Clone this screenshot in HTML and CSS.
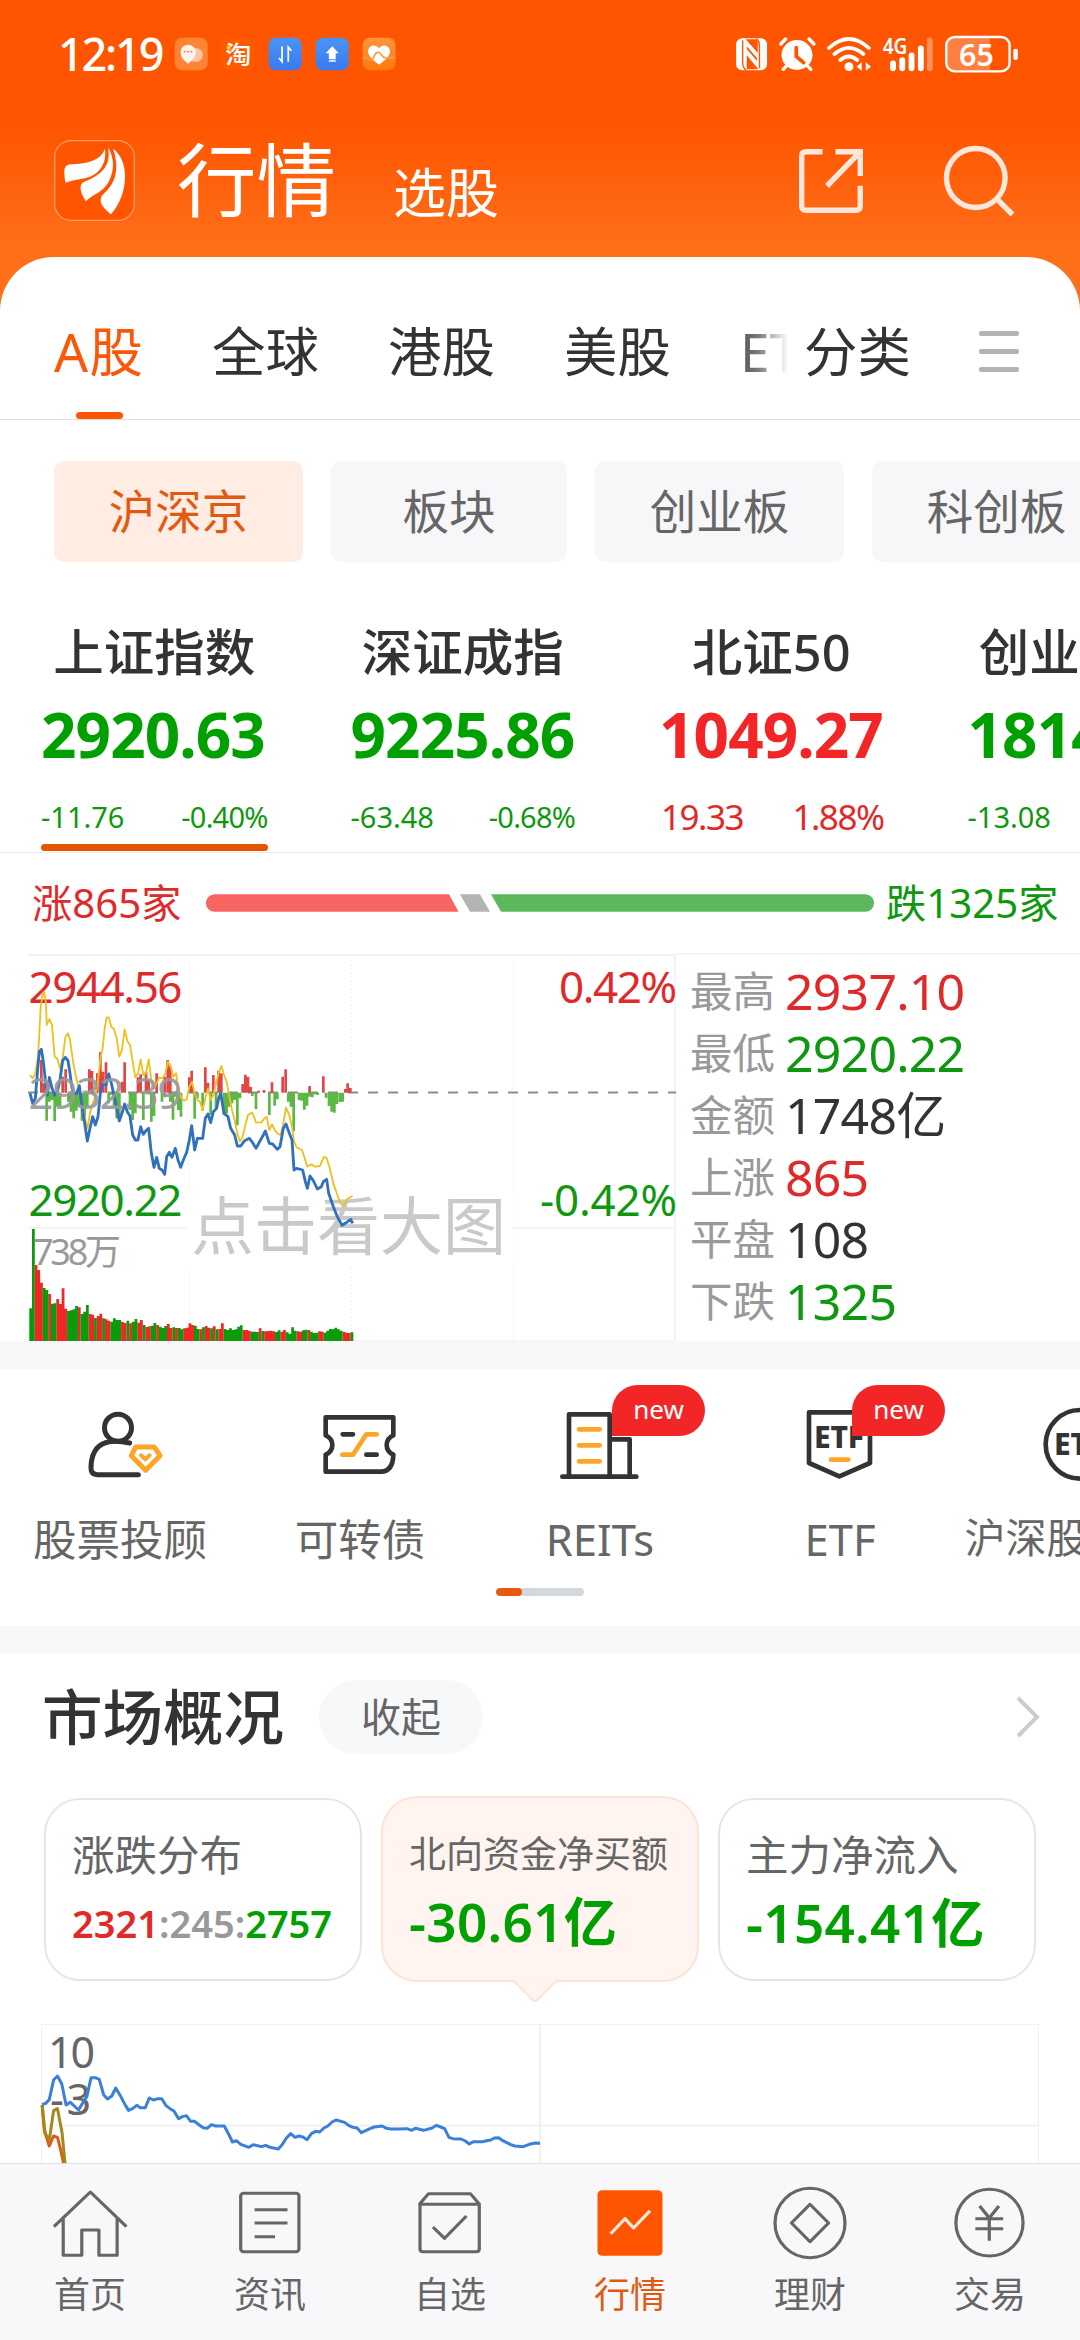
FILE: index.html
```html
<!DOCTYPE html>
<html lang="zh-CN">
<head>
<meta charset="utf-8">
<title>行情</title>
<link rel="stylesheet" href="styles.css">
</head>
<body>
<div class="app">
  <header class="top">
    <div class="status">
      <span class="clock">12:19</span>
      <svg class="notif" viewBox="500 100 660 120" preserveAspectRatio="none">
        <defs>
          <linearGradient id="gb" x1="0" y1="0" x2="0" y2="1"><stop offset="0" stop-color="#4a95f5"/><stop offset="1" stop-color="#3a78f0"/></linearGradient>
          <linearGradient id="go" x1="0" y1="0" x2="0" y2="1"><stop offset="0" stop-color="#ff9440"/><stop offset="1" stop-color="#ff7a0a"/></linearGradient>
        </defs>
        <rect x="508" y="111" width="96" height="98" rx="22" fill="#ff8433"/>
        <circle cx="569" cy="163" r="21" fill="#ffc6a0"/>
        <path d="M547 189c-12-9-22-19-22-35a22 22 0 0 1 44 0c0 16-10 26-22 35z" fill="#fff5ee"/>
        <path d="M534 153h5M544 153h5M554 153h5" stroke="#f08050" stroke-width="5"/>
        <rect x="644" y="111" width="96" height="98" rx="22" fill="#ff5a00"/>
        <text x="693" y="189" font-size="76" font-weight="500" fill="#fff" text-anchor="middle">淘</text>
        <circle cx="665" cy="141" r="6" fill="#ffe100"/>
        <rect x="781" y="111" width="96" height="98" rx="22" fill="url(#gb)"/>
        <path d="M820 137v46l-9-11M838 183v-44l9 11" fill="none" stroke="#fff" stroke-width="5"/>
        <rect x="918" y="111" width="96" height="98" rx="22" fill="url(#gb)"/>
        <path d="M966 137l19 21h-9v18h-20v-18h-9zM956 179h20v4h-20z" fill="#fff"/>
        <rect x="1054" y="111" width="96" height="98" rx="22" fill="url(#go)"/>
        <path d="M1102 192c-18-14-32-25-32-40 0-18 22-24 32-9 10-15 32-9 32 9 0 15-14 26-32 40z" fill="#fff"/>
        <path d="M1054 171h14c6 9 14 9 18 0 7-20 16-20 23-8 6 9 12 10 18 8h23" fill="none" stroke="#ff9c40" stroke-width="5"/>
      </svg>
      <svg class="system" viewBox="560 100 840 120" preserveAspectRatio="none">
        <rect x="569" y="113" width="90" height="96" rx="18" fill="#fff"/>
        <path d="M588 119v68q0 13 10 22M637 203v-68q0-13-8-22" fill="none" stroke="#ff5500" stroke-width="4"/>
        <path d="M597 116L632 157V116zM600 206V164L634 206zM600 137l30 36v8l-30-36z" fill="#ff5500"/>
        <circle cx="746" cy="163" r="45" fill="#fff"/>
        <path d="M699 130l14-15M795 130l-14-15M715 196l-9 10M777 196l9 10" stroke="#fff" stroke-width="10" stroke-linecap="round"/>
        <path d="M744 141v26l21 19" fill="none" stroke="#ff5500" stroke-width="11" stroke-linecap="round"/>
        <g fill="none" stroke="#fff" stroke-width="11" stroke-linecap="round">
          <path d="M839 142q58-54 116 0M855 160q42-37 84 0M872 178q25-21 49 0"/>
        </g>
        <circle cx="897" cy="198" r="13" fill="#fff"/>
        <path d="M919 198l15-13v25zM961 198l-15-13v25z" fill="#fff"/>
        <text x="995" y="159" font-size="66" font-weight="600" textLength="72" lengthAdjust="spacingAndGlyphs" fill="#fff">4G</text>
        <g stroke="#fff" stroke-width="17" stroke-linecap="round"><path d="M1025 188v15M1052 178v25M1079 164v39M1106 143v60"/><path d="M1132 119v84" opacity=".35"/></g>
        <path d="M1205 112h102v96h-102q-22 0-22-22v-52q0-22 22-22z" fill="#ff7f42"/>
        <rect x="1180" y="109" width="184" height="103" rx="25" fill="none" stroke="#fff" stroke-width="7"/>
        <rect x="1375" y="144" width="13" height="34" rx="6" fill="#fff"/>
        <text x="1217" y="195" font-size="94" font-weight="600" textLength="101" lengthAdjust="spacingAndGlyphs" fill="#fff">65</text>
      </svg>
    </div>
    <div class="titlebar">
      <svg class="logo" viewBox="157 420 235 242" preserveAspectRatio="none">
        <rect x="159" y="422" width="231" height="238" rx="48" fill="#ff5500" stroke="#ff9a66" stroke-width="4"/>
        <path d="M305 446c-14 38-52 44-104 47q-13 2-14 20 0 24 4 35c26-13 62-8 86-27 26-20 31-48 28-75z" fill="#fff"/>
        <path d="M314 442c7 46-5 78-72 104q-8 4-8 18 2 20 16 39c18-21 50-26 66-59 19-38 14-72-2-102z" fill="#fff"/>
        <path d="M329 446c18 62 9 100-30 137q-8 8-6 24 4 15 29 35c26-30 42-72 41-116-1-38-13-62-34-80z" fill="#fff"/>
      </svg>
      <h1 class="title">行情</h1>
      <span class="subtitle">选股</span>
      <svg class="share" viewBox="799 149 64 64"><g fill="none" stroke="#ffe6da" stroke-width="5.4"><path d="M822.5 151.700H806q-4.300 0-4.300 4.300v50q0 4.300 4.300 4.300h50q4.300 0 4.300-4.300v-20.300"/><path d="M835.500 151.700h24.800V176M859 153L827 186"/></g></svg>
      <svg class="search" viewBox="943 145 72 72"><g fill="none" stroke="#ffe6da" stroke-width="5.4"><ellipse cx="975.800" cy="178" rx="29.300" ry="29.500"/><path d="M997 199l15.500 15.500"/></g></svg>
    </div>
  </header>

  <main class="panel">
    <nav class="tabs">
      <span class="tab on">A股</span><span class="tab">全球</span><span class="tab">港股</span><span class="tab">美股</span><span class="tab cut">ETF</span><span class="tab sort">分类</span>
      <span class="menu"><i></i><i></i><i></i></span>
    </nav>
    <div class="chips">
      <span class="chip on">沪深京</span><span class="chip narrow">板块</span><span class="chip">创业板</span><span class="chip">科创板</span>
    </div>
    <section class="indices">
      <div class="index fall on"><h2>上证指数</h2><strong>2920.63</strong><p><span>-11.76</span><span>-0.40%</span></p></div>
      <div class="index fall"><h2>深证成指</h2><strong>9225.86</strong><p><span>-63.48</span><span>-0.68%</span></p></div>
      <div class="index rise"><h2>北证50</h2><strong>1049.27</strong><p><span>19.33</span><span>1.88%</span></p></div>
      <div class="index fall"><h2>创业板指</h2><strong>1814.26</strong><p><span>-13.08</span><span>-0.72%</span></p></div>
    </section>
    <div class="breadth">
      <span class="up">涨865家</span>
      <svg class="ratio" viewBox="206 894 668 17.500"><path d="M214.700 894H449l9.500 17.500H214.700a8.750 8.750 0 0 1 0-17.500z" fill="#f66562"/><path d="M460 894h20l10 17.500h-20z" fill="#b3b3b3"/><path d="M491 894h374.300a8.750 8.750 0 0 1 0 17.500H501z" fill="#5cb85c"/></svg>
      <span class="down">跌1325家</span>
    </div>
    <section class="quote">
      <svg class="minute" viewBox="28 953 648 388">
        <g fill="none" stroke="#f3f3f5" stroke-width="2"><path d="M28 955H676M28 1227.700H676M28 1341H676M675 954v387"/><path d="M189.700 956v385M351.500 956v385M513 956v385" stroke-width="1" stroke="#e6e6e6" stroke-dasharray="1 3"/></g>
        <path d="M28 1092.500H676" stroke="#8c8c8c" stroke-width="2" stroke-dasharray="10 10"/>
        <rect x="187" y="1190" width="326" height="76" fill="#fff"/>
        <text class="mark" x="191" y="1249">点击看大图</text>
        <g class="lab">
          <text x="28.500" y="1002.700" textLength="154" class="r">2944.56</text>
          <text x="677" y="1002.700" text-anchor="end" textLength="118" class="r">0.42%</text>
        </g>
        <g transform="translate(0 940) scale(.33333)" fill="none" stroke-linejoin="round">
          <path stroke="#e04848" stroke-width="8.100" d="M124 458V360M132 458V430M188 458V410M197 458V388M268 458V388M276 458V393M292 458V400M301 458V337M309 458V395M318 458V367M366 458V425M374 458V367M414 458V412M422 458V403M438 458V395M446 458V420M470 458V400M494 458V410M503 458V360M511 458V380M568 458V412M575 458V392M616 458V382M624 458V428M640 458V405M656 458V392M664 458V400M728 458V432M736 458V404M744 458V410M752 458V440M776 458V452M792 458V450M816 458V427M848 458V410M857 458V388M929 458V438M970 458V409M1036 458V447M1043 458V430M1051 458V444"/>
          <path stroke="#5cb845" stroke-width="8.100" d="M140 458V542M148 458V485M156 458V480M164 458V544M172 458V500M180 458V498M205 458V485M213 458V515M221 458V535M229 458V512M237 458V500M246 458V542M254 458V530M262 458V500M326 458V490M334 458V465M342 458V500M350 458V535M358 458V540M390 458V510M398 458V540M406 458V520M430 458V540M454 458V545M462 458V528M486 458V485M495 458V472M511 458V485M519 458V539M527 458V470M535 458V510M543 458V530M584 458V536M592 458V475M608 458V512M632 458V525M648 458V505M672 458V525M680 458V520M688 458V500M696 458V490M704 458V480M712 458V556M720 458V475M757 458V468M768 458V507M808 458V525M824 458V497M832 458V478M865 458V485M873 458V500M881 458V574M897 458V480M905 458V482M913 458V509M921 458V497M929 458V470M937 458V472M945 458V463M953 458V465M978 458V473M987 458V498M995 458V515M1003 458V518M1011 458V492M1020 458V486M1028 458V485"/>
          <g id="volume" stroke-width="8.300"></g>
          <polyline stroke="#f0c020" stroke-width="5.500" points="90,405 98,415 106,400 114,350 118,280 122,200 128,165 132,155 138,190 140,255 148,237 156,255 164,350 172,357 180,385 188,355 196,292 204,280 210,300 220,370 230,420 238,450 246,490 254,530 262,565 270,520 278,490 286,470 294,420 302,350 308,325 314,265 320,232 326,232 334,260 342,268 350,295 358,350 366,330 374,268 382,303 390,315 398,365 406,412 414,400 422,358 430,405 438,400 446,358 454,420 462,445 470,430 478,412 488,415 496,400 504,365 512,378 520,410 528,400 536,450 544,475 552,482 560,478 568,440 576,425 584,460 592,480 600,485 608,510 616,475 624,445 632,480 640,465 648,430 656,400 664,378 672,405 680,425 688,470 696,510 704,540 712,580 720,605 728,590 736,555 744,525 756,518 762,530 768,548 784,547 792,537 800,530 808,570 816,553 824,570 832,580 842,585 850,550 858,503 868,525 876,560 882,605 890,622 906,630 914,655 922,680 934,673 945,680 960,678 972,650 980,655 988,680 1000,730 1012,765 1022,790 1030,797 1044,775 1058,768"/>
          <polyline stroke="#3070bd" stroke-width="8.500" points="90,460 98,490 106,475 112,400 118,335 124,328 130,365 136,420 142,465 148,412 156,445 164,465 172,455 180,420 188,362 196,352 204,362 210,400 216,445 222,462 230,460 238,437 246,500 254,550 262,603 270,565 278,530 286,555 294,530 302,450 310,430 318,435 326,402 334,430 342,465 350,505 358,543 366,520 374,492 382,515 390,528 398,585 406,600 414,600 422,560 430,583 438,572 446,565 454,640 462,682 470,652 478,685 486,690 494,703 500,650 508,637 516,652 526,625 534,660 542,682 550,660 560,637 568,600 575,557 584,630 592,595 608,595 616,535 624,522 632,548 640,515 650,505 656,475 662,460 672,520 684,530 692,565 704,585 712,618 722,618 734,602 748,595 758,608 768,625 780,603 790,585 796,573 808,610 818,612 832,628 840,620 850,565 858,552 868,580 876,600 882,690 890,685 908,690 916,725 922,745 930,708 940,722 952,747 964,740 970,725 980,718 986,760 1000,800 1012,830 1026,856 1036,850 1052,838 1058,850"/>
        </g>
        <g class="lab">
          <text x="28.500" y="1108.700" textLength="154" class="n" opacity=".9">2932.39</text>
          <text x="28.500" y="1215.700" textLength="154" class="g">2920.22</text>
          <text x="677" y="1215.700" text-anchor="end" textLength="137" class="g">-0.42%</text>
          <text x="33" y="1265" textLength="88" class="n vol">738万</text>
        </g>
      </svg>
      <dl class="stats">
        <div><dt>最高</dt><dd class="up">2937.10</dd></div>
        <div><dt>最低</dt><dd class="down">2920.22</dd></div>
        <div><dt>金额</dt><dd>1748亿</dd></div>
        <div><dt>上涨</dt><dd class="up">865</dd></div>
        <div><dt>平盘</dt><dd>108</dd></div>
        <div><dt>下跌</dt><dd class="down">1325</dd></div>
      </dl>
    </section>

    <section class="tools">
      <div class="tool-row">
        <div class="tool">
          <svg viewBox="36 33 288 288"><g fill="none" stroke="#333" stroke-width="15" stroke-linecap="round" stroke-linejoin="round"><circle cx="174" cy="128" r="40.500"/><path d="M209 174C150 160 93 168 93 250q0 19 19 19h123"/><g stroke="#ffa526"><path d="M227 186h56l17 26-43 44-43-44z"/><path d="M243 211l13 12 13-12" stroke-width="12"/></g></g></svg>
          <span>股票投顾</span></div>
        <div class="tool">
          <svg viewBox="756 33 288 288"><g fill="none" stroke="#333" stroke-width="14" stroke-linecap="round" stroke-linejoin="round"><path d="M797 97h203v54q-20 9-20 29t20 29q-1 50-37 51H797v-51q20-9 20-29t-20-29z"/><path d="M848 148h31M919 209h31"/><path d="M847 209h32l40-61h31" stroke="#ffa526"/></g></svg>
          <span>可转债</span></div>
        <div class="tool">
          <svg viewBox="6 63 288 288"><g fill="none" stroke="#333" stroke-width="14" stroke-linecap="round" stroke-linejoin="round"><path d="M37 305h222M57 305V118h122v187M179 193h60v112"/><path d="M87 163h62M87 211h62M87 259h62" stroke="#ffa526"/></g></svg>
          <b class="new">new</b><span>REITs</span></div>
        <div class="tool">
          <svg viewBox="726 63 288 288"><g fill="none" stroke="#333" stroke-width="14" stroke-linecap="round" stroke-linejoin="round"><path d="M777 112h183v152l-92 40-91-40z"/><path d="M843 254h52" stroke="#ffa526"/></g><text class="etf" x="792" y="220" textLength="150">ETF</text></svg>
          <b class="new">new</b><span>ETF</span></div>
        <div class="tool">
          <svg viewBox="1446 63 288 288"><circle cx="1590" cy="208" r="103" fill="none" stroke="#333" stroke-width="14"/><text class="etf" x="1512" y="241" textLength="150">ETF</text></svg>
          <span class="sm">沪深股通ETF</span></div>
      </div>
      <div class="pager"><i></i></div>
    </section>

    <section class="market">
      <div class="head"><h3>市场概况</h3><span class="pill">收起</span><svg viewBox="0 0 26 42"><path d="M3 2l19 19L3 40" fill="none" stroke="#ccc" stroke-width="4"/></svg></div>
      <div class="cards">
        <div class="card"><h4>涨跌分布</h4><p class="tri"><span class="up">2321</span><span class="flat">:245:</span><span class="down">2757</span></p></div>
        <div class="card on"><h4>北向资金净买额</h4><p class="down">-30.61亿</p></div>
        <div class="card"><h4>主力净流入</h4><p class="down">-154.41亿</p></div>
      </div>
      <svg class="flow" viewBox="40 2023 1000 140">
        <g fill="none" stroke="#f1f1f3"><path d="M41.500 2163V2024.500H1038.500V2163" stroke-width="1"/><path d="M540 2024v139M41 2125.500h997" stroke-width="2"/></g>
        <g font-size="43" fill="#666"><text x="48" y="2067.500" textLength="47">10</text><text x="50" y="2114.500" textLength="41">-3</text></g>
        <g transform="translate(0 2000) scale(.35714 .33333)" fill="none" stroke-linejoin="round">
          <polyline vector-effect="non-scaling-stroke" stroke="#e05a10" stroke-width="3" points="118,315 124,390 138,438 150,408 161,412 170,450 178,490"/>
          <polyline vector-effect="non-scaling-stroke" stroke="#a8861c" stroke-width="3" points="118,315 126,400 138,420 150,332 161,326 174,400 182,490"/>
          <polyline vector-effect="non-scaling-stroke" stroke="#3a7fd8" stroke-width="3" points="118,313 128,310 138,299 150,240 161,228 173,252 185,315 197,307 208,318 220,330 232,308 243,290 255,233 267,233 278,238 290,284 301,297 313,288 324,264 338,289 350,314 360,331 372,325 383,316 393,323 407,323 418,294 430,300 442,296 453,296 465,317 476,326 487,333 500,356 511,350 522,347 534,364 545,364 558,375 569,383 580,385 592,374 604,378 628,378 640,402 651,426 662,422 674,433 697,442 709,434 732,440 744,436 756,442 779,447 790,434 802,414 814,401 826,412 837,408 848,411 860,419 872,401 884,394 895,396 907,384 918,378 930,366 941,360 965,367 976,376 988,382 1000,384 1012,398 1024,392 1036,386 1048,381 1070,378 1082,385 1094,387 1118,387 1140,386 1152,391 1163,385 1186,391 1210,384 1222,376 1234,381 1245,386 1257,412 1268,416 1291,417 1303,423 1314,432 1326,425 1350,425 1374,420 1384,414 1396,413 1408,422 1430,434 1442,438 1465,440 1482,433 1500,429 1512,430"/>
        </g>
      </svg>
    </section>
  </main>

  <nav class="dock">
    <a><svg viewBox="134.400 540 235.200 252" preserveAspectRatio="none"><path d="M151 680l102-104 101 104M177 656v110h52v-76h48v76h51V656"/></svg>首页</a>
    <a><svg viewBox="638.400 540 235.200 252" preserveAspectRatio="none"><rect x="674" y="580" width="163" height="175" rx="8"/><path d="M713 629h92M713 669h92M713 710h57"/></svg>资讯</a>
    <a><svg viewBox="1142.400 540 235.200 252" preserveAspectRatio="none"><path d="M1175 612l25-31h117l25 31v134q0 9-9 9h-148q-9 0-9-9V612zM1175 613h167M1212 681l33 34 61-67"/></svg>自选</a>
    <a class="on"><svg viewBox="190.400 540 235.200 252" preserveAspectRatio="none"><rect x="217" y="571" width="182" height="196" rx="13" fill="#ff5500" stroke="none"/><path d="M254 701l40-45 24 28 46-52" stroke="#ffe9de"/></svg>行情</a>
    <a><svg viewBox="694.400 540 235.200 252" preserveAspectRatio="none"><ellipse cx="812" cy="669" rx="98" ry="104"/><path d="M812 613l52 56-52 56-52-56z"/></svg>理财</a>
    <a><svg viewBox="1198.400 540 235.200 252" preserveAspectRatio="none"><ellipse cx="1314.500" cy="668" rx="94" ry="100"/><path d="M1287 618l27 36 27-36M1275 656h78M1275 686h78M1314 654v68"/></svg>交易</a>
  </nav>
</div>
<script src="volume.js"></script>
</body>
</html>
```
FILE: volume.js
```js
// Volume bar tops, one per two minutes; the suffix gives the bar colour (r = up, g = down).
var bars = ("1105g 867g 975r 990r 1028r 1044g 1050g 1062r 1091g 1090g 1077r 1092r 1045r 1106r 1113g 1111g 1108g 1098g 1102r 1122g " +
  "1115g 1095g 1122r 1124r 1134g 1128r 1121r 1135g 1138r 1142r 1145g 1135g 1140g 1140g 1146r 1149r 1142g 1150r 1145g 1137g " +
  "1148r 1140r 1155g 1161r 1159r 1157g 1149g 1155r 1160g 1164g 1158g 1152r 1164r 1162g 1164r 1164g 1168g 1165r 1163r 1150r " +
  "1155r 1157g 1167g 1168r 1162g 1158r 1163r 1165g 1159r 1168g 1167r 1150r 1167g 1170g 1165g 1170g 1168g 1160g 1156g 1170r " +
  "1170r 1172r 1175g 1175g 1176g 1165r 1173g 1174r 1173r 1172r 1174r 1176g 1171g 1175r 1170r 1177g 1181g 1162g 1172g 1174r " +
  "1175r 1171g 1169g 1170r 1175g 1179g 1178g 1174r 1175r 1178g 1172g 1167g 1168g 1163g 1168g 1172g 1175r 1178r 1179r 1177g").split(" ");
var paths = { r: "", g: "" };
bars.forEach(function (b, i) {
  paths[b.slice(-1)] += "M" + (92 + i * 8.1).toFixed(1) + " 1203V" + parseInt(b, 10);
});
document.getElementById("volume").innerHTML =
  '<path stroke="#f22626" d="' + paths.r + '"/><path stroke="#0a9a0a" d="' + paths.g + '"/>';
```
FILE: styles.css
```css
* { box-sizing: border-box; margin: 0; padding: 0; }
body { font-family: "Noto Sans", "Noto Sans CJK SC", sans-serif; background: #fff; color: #333; }
h1, h2, h3, h4, strong, i, b { font-weight: 400; font-style: normal; }
svg { display: block; flex: none; }
.app { width: 1080px; height: 2340px; overflow: hidden; display: flex; flex-direction: column; background: linear-gradient(#ff5500 125px, #ff6f1a 250px, #ff6f1a 320px); }
.up { color: #e02a2a; }
.down { color: #0f980f; }
.flat { color: #999; }

.top { height: 257px; flex: none; color: #fff; }
.status { height: 107px; display: flex; align-items: center; padding-left: 58px; }
.clock { width: 114px; font-size: 45px; line-height: 60px; font-weight: 500; letter-spacing: -2.200px; }
.notif { width: 227px; height: 40px; }
.system { width: 289px; height: 40px; margin-left: 334px; }
.titlebar { height: 150px; display: flex; align-items: center; padding-left: 54px; }
.logo { width: 81px; height: 81px; margin-top: -3px; }
.title { width: 216px; margin: -6px 0 0 42px; font-size: 79.500px; line-height: 100px; }
.subtitle { width: 406px; margin-top: 22px; font-size: 53px; line-height: 70px; }
.share { width: 64px; height: 64px; margin-top: -2px; }
.search { width: 72px; height: 72px; margin: -2px 0 0 80px; }

.panel { flex: 1; min-height: 0; overflow: hidden; background: #fff; border-radius: 54px 54px 0 0; }
.tabs { height: 163px; display: flex; align-items: center; padding: 28px 61px 0 54px; border-bottom: 1px solid #e0e0e0; }
.tab { position: relative; width: 176px; font-size: 53.400px; line-height: 134px; white-space: nowrap; }
.tab.on { width: 158px; color: #fb5708; letter-spacing: 1.500px; }
.tab.on::after { content: ""; position: absolute; left: 22px; bottom: 0; width: 47px; height: 7px; border-radius: 4px; background: #ff5500; }
.tab.cut { width: 49px; margin-right: 15px; overflow: hidden; background: linear-gradient(90deg, #555, #777 35%, #fff 98%); -webkit-background-clip: text; background-clip: text; color: transparent; }
.tab.sort { width: auto; }
.menu { margin: -2px 0 0 auto; display: flex; flex-direction: column; gap: 13px; }
.menu i { width: 40px; height: 5px; border-radius: 2px; background: #b3b3b3; }

.chips { display: flex; gap: 28px; padding: 41px 0 0 54px; }
.chip { flex: none; width: 249px; height: 101px; border-radius: 10px; background: #f7f7fa; color: #666; font-size: 46.500px; line-height: 101px; text-align: center; }
.chip.narrow { width: 236px; }
.chip.on { background: #ffece3; color: #e05a12; }

.indices { height: 291px; display: flex; border-bottom: 1px solid #ececec; overflow: hidden; }
.index { flex: none; width: 308.500px; padding: 50px 42px 0 42px; }
.index h2 { margin: 0 -20px; font-size: 50.500px; font-weight: 500; line-height: 80px; text-align: center; white-space: nowrap; }
.index strong { display: block; font-size: 62px; font-weight: 700; line-height: 84px; letter-spacing: -.9px; white-space: nowrap; }
.index p { display: flex; justify-content: space-between; height: 69px; padding-top: 11px; font-size: 29px; line-height: 60px; }
.index.fall p { color: #0f980f; }
.index.fall p span:last-child { letter-spacing: -.8px; }
.index.rise p { color: #e02a2a; font-size: 35px; letter-spacing: -1.500px; padding-left: 2px; }
.index.fall strong { color: #00a000; }
.index.rise strong { color: #f22626; }
.index.on { padding-left: 41px; padding-right: 41px; }
.index.on::after { content: ""; display: block; height: 7px; margin-top: -1px; border-radius: 4px; background: #e65400; }

.breadth { height: 100px; display: flex; align-items: center; padding: 0 0 0 32px; font-size: 40.200px; line-height: 60px; }
.breadth .up { width: 174px; }
.ratio { width: 668px; height: 18px; margin-right: 12px; }

.quote { display: flex; height: 388px; padding-left: 28px; }
.minute { width: 648px; height: 388px; }
.minute .lab { font-size: 44px; }
.minute .r { fill: #e02a2a; }
.minute .g { fill: #0f980f; }
.minute .n { fill: #999; }
.minute .vol { font-size: 36px; }
.minute .mark { font-size: 63px; fill: #c9c9c9; }
.stats { flex: 1; border-top: 2px solid #f5f5f7; padding: 5px 0 0 14px; }
.stats div { display: flex; height: 62px; line-height: 62px; }
.stats dt { width: 95px; font-size: 42.500px; color: #999; }
.stats dd { font-size: 50px; letter-spacing: -.8px; white-space: nowrap; }

.tools { height: 285px; border-top: 28px solid #f6f7f9; overflow: hidden; }
.tool-row { display: flex; padding-top: 27px; }
.tool { position: relative; flex: none; width: 240px; display: flex; flex-direction: column; align-items: center; color: #666; font-size: 43.500px; line-height: 60px; }
.tool svg { width: 96px; height: 96px; margin-bottom: 17px; }
.tool .sm { font-size: 41px; white-space: nowrap; line-height: 57px; }
.new { position: absolute; left: 132px; top: -11px; width: 93px; height: 51px; border-radius: 26px 26px 26px 0; background: #f22626; color: #fff; font-size: 26px; line-height: 49px; text-align: center; }
.etf { font-size: 90px; font-weight: 800; fill: #333; }
.pager { width: 88px; height: 8px; margin: 19px auto 0; border-radius: 4px; background: #d3d8dc; overflow: hidden; }
.pager i { display: block; width: 26px; height: 8px; border-radius: 4px; background: #e65a10; }

.market { border-top: 27px solid #f6f7f9; }
.head { display: flex; align-items: center; height: 128px; padding: 0 39px 0 42px; }
.head h3 { width: 277px; font-size: 60.500px; font-weight: 500; line-height: 80px; }
.pill { width: 164px; height: 74px; border-radius: 37px; background: #f7f8fa; color: #666; font-size: 40px; line-height: 74px; text-align: center; }
.head svg { width: 26px; height: 42px; margin-left: auto; }
.cards { display: flex; align-items: center; justify-content: space-between; height: 186px; margin-top: 15px; padding: 0 44px; }
.card { position: relative; width: 318px; height: 183px; border: 2px solid #e6e6e6; border-radius: 36px; padding: 25px 0 0 26px; white-space: nowrap; }
.card h4 { height: 60px; font-size: 42.500px; line-height: 60px; color: #666; }
.card p { font-size: 53px; font-weight: 600; line-height: 76px; letter-spacing: .3px; }
.card p.down, .card p .down { color: #00a000; }
.card .tri { font-size: 38px; letter-spacing: 0; }
.card.on { height: 186px; padding-top: 26px; background: #fff4ef; border-color: #fde3d6; }
.card.on h4 { font-size: 37px; }
.card.on::after { content: ""; position: absolute; left: 135px; bottom: -17px; width: 32px; height: 32px; background: #fff4ef; border: solid #fde3d6; border-width: 0 2px 2px 0; border-radius: 0 0 5px 0; transform: rotate(45deg); clip-path: polygon(100% 0, 100% 100%, 0 100%); }
.flow { width: 1000px; height: 140px; margin: 41px 0 0 40px; }

.dock { flex: none; height: 177px; display: flex; background: #f8f8fa; border-top: 1px solid #e2e2e4; }
.dock a { width: 180px; padding-top: 16px; display: flex; flex-direction: column; align-items: center; gap: 6px; color: #666; font-size: 36px; line-height: 50px; }
.dock a.on { color: #e05a12; }
.dock svg { width: 84px; height: 84px; fill: none; stroke: #666; stroke-width: 9; stroke-linejoin: round; }
```
